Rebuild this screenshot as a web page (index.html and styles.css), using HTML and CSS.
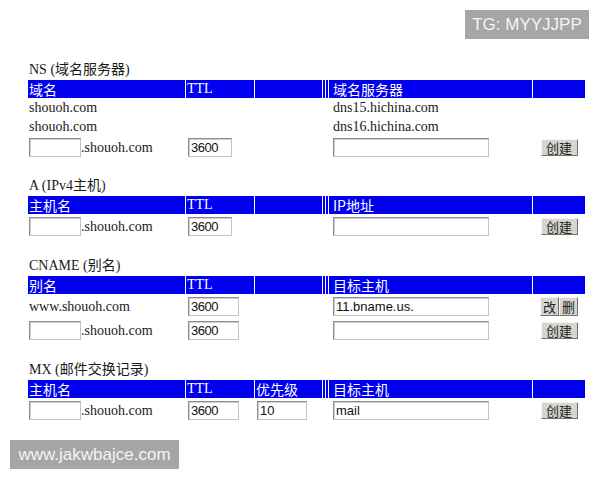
FILE: index.html
```html
<!DOCTYPE html>
<html lang="zh">
<head>
<meta charset="utf-8">
<link rel="stylesheet" href="styles.css">
</head>
<body>
<div class="page">
  <section class="sec">
    <div class="title">NS (域名服务器)</div>
    <div class="tbl">
      <div class="row head">
        <div class="c">域名</div><div class="c ser">TTL</div><div class="c"></div><div class="c"></div><div class="c"></div><div class="c c6">域名服务器</div><div class="c"></div>
      </div>
      <div class="row text">
        <div class="c">shouoh.com</div><div class="c"></div><div class="c"></div><div class="c"></div><div class="c"></div><div class="c c6">dns15.hichina.com</div><div class="c"></div>
      </div>
      <div class="row text">
        <div class="c">shouoh.com</div><div class="c"></div><div class="c"></div><div class="c"></div><div class="c"></div><div class="c c6">dns16.hichina.com</div><div class="c"></div>
      </div>
      <div class="row inp short">
        <div class="c"><span class="in host"></span>.shouoh.com</div><div class="c"><span class="in ttl">3600</span></div><div class="c"></div><div class="c"></div><div class="c"></div><div class="c c6"><span class="in big"></span></div><div class="c btns"><span class="btn">创建</span></div>
      </div>
    </div>
  </section>

  <section class="sec">
    <div class="title">A (IPv4主机)</div>
    <div class="tbl">
      <div class="row head">
        <div class="c">主机名</div><div class="c ser">TTL</div><div class="c"></div><div class="c"></div><div class="c"></div><div class="c c6">IP地址</div><div class="c"></div>
      </div>
      <div class="row inp">
        <div class="c"><span class="in host"></span>.shouoh.com</div><div class="c"><span class="in ttl">3600</span></div><div class="c"></div><div class="c"></div><div class="c"></div><div class="c c6"><span class="in big"></span></div><div class="c btns"><span class="btn">创建</span></div>
      </div>
    </div>
  </section>

  <section class="sec">
    <div class="title">CNAME (别名)</div>
    <div class="tbl">
      <div class="row head">
        <div class="c">别名</div><div class="c ser">TTL</div><div class="c"></div><div class="c"></div><div class="c"></div><div class="c c6">目标主机</div><div class="c"></div>
      </div>
      <div class="row inp">
        <div class="c">www.shouoh.com</div><div class="c"><span class="in ttl wide">3600</span></div><div class="c"></div><div class="c"></div><div class="c"></div><div class="c c6"><span class="in big">11.bname.us.</span></div><div class="c btns"><span class="btn sm">改</span><span class="btn sm">删</span></div>
      </div>
      <div class="row inp">
        <div class="c"><span class="in host"></span>.shouoh.com</div><div class="c"><span class="in ttl wide">3600</span></div><div class="c"></div><div class="c"></div><div class="c"></div><div class="c c6"><span class="in big"></span></div><div class="c btns"><span class="btn">创建</span></div>
      </div>
    </div>
  </section>

  <section class="sec">
    <div class="title">MX (邮件交换记录)</div>
    <div class="tbl">
      <div class="row head">
        <div class="c">主机名</div><div class="c ser">TTL</div><div class="c">优先级</div><div class="c"></div><div class="c"></div><div class="c c6">目标主机</div><div class="c"></div>
      </div>
      <div class="row inp">
        <div class="c"><span class="in host"></span>.shouoh.com</div><div class="c"><span class="in ttl wide">3600</span></div><div class="c"><span class="in pri">10</span></div><div class="c"></div><div class="c"></div><div class="c c6"><span class="in big">mail</span></div><div class="c btns"><span class="btn">创建</span></div>
      </div>
    </div>
  </section>
</div>
<div class="wm wm-tg">TG: MYYJJPP</div>
<div class="wm wm-url">www.jakwbajce.com</div>
</body>
</html>
```

FILE: styles.css
```css
html, body {
  margin: 0;
  padding: 0;
  background: #ffffff;
}
body {
  width: 600px;
  height: 480px;
  position: relative;
  overflow: hidden;
  font-family: "Liberation Serif", "Noto Sans CJK SC", serif;
  font-size: 14px;
  color: #1a1a1a;
}
.page {
  padding: 62px 0 0 28px;
}
.sec + .sec {
  margin-top: 20px;
}
.title {
  height: 18px;
  line-height: 16px;
  font-size: 14px;
  padding-left: 1px;
  box-sizing: border-box;
}
.tbl {
  display: flex;
  flex-direction: column;
  gap: 1px;
  width: 557px;
}
.row {
  display: grid;
  grid-template-columns: 157px 68px 67px 2px 2px 203px 52px;
  column-gap: 1px;
}
.row .c {
  display: flex;
  align-items: center;
  white-space: nowrap;
  padding-left: 1px;
  overflow: hidden;
}
.row .c6 {
  padding-left: 4px;
}
.head {
  height: 18px;
}
.head .c {
  background: #0000ee;
  color: #ffffff;
  font-family: "Noto Sans CJK SC", sans-serif;
  font-size: 14px;
  line-height: 18px;
}
.head .c.ser {
  font-family: "Liberation Serif", serif;
  font-size: 14px;
}
.text {
  height: 18px;
}
.inp {
  height: 23px;
}
.inp.short {
  height: 21px;
}
.in {
  display: inline-flex;
  align-items: center;
  box-sizing: border-box;
  height: 19px;
  border: 1px solid #8c8c8c;
  border-right-color: #c4c4c4;
  border-bottom-color: #c4c4c4;
  box-shadow: inset 1px 1px 0 #d0d0d0;
  background: #fff;
  font-family: "Liberation Sans", "Noto Sans CJK SC", sans-serif;
  font-size: 13px;
  color: #111;
  padding-left: 2px;
}
.in.host {
  width: 52px;
}
.in.ttl {
  width: 44px;
  margin-left: 1px;
  letter-spacing: -0.5px;
}
.in.ttl.wide {
  width: 51px;
}
.in.pri {
  width: 50px;
  margin-left: 1px;
}
.in.big {
  width: 156px;
}
.btns {
  justify-content: center;
}
.btns.c {
  padding-left: 0;
}
.btn {
  display: inline-flex;
  align-items: center;
  justify-content: center;
  box-sizing: border-box;
  width: 37px;
  height: 17px;
  background: #d8d5ce;
  border: 1px solid;
  border-color: #f4f4f4 #6e6e6e #6e6e6e #f4f4f4;
  font-family: "Noto Sans CJK SC", sans-serif;
  font-size: 13px;
  color: #222;
}
.btn.sm {
  width: 19px;
  height: 19px;
}
.wm {
  position: absolute;
  background: #a6a6a6;
  color: #f4f4f4;
  font-family: "Liberation Sans", sans-serif;
  font-size: 17px;
  display: flex;
  align-items: center;
  justify-content: center;
}
.wm-tg {
  left: 465px;
  top: 10px;
  width: 124px;
  height: 29px;
}
.wm-url {
  left: 10px;
  top: 440px;
  width: 169px;
  height: 29px;
}
```
